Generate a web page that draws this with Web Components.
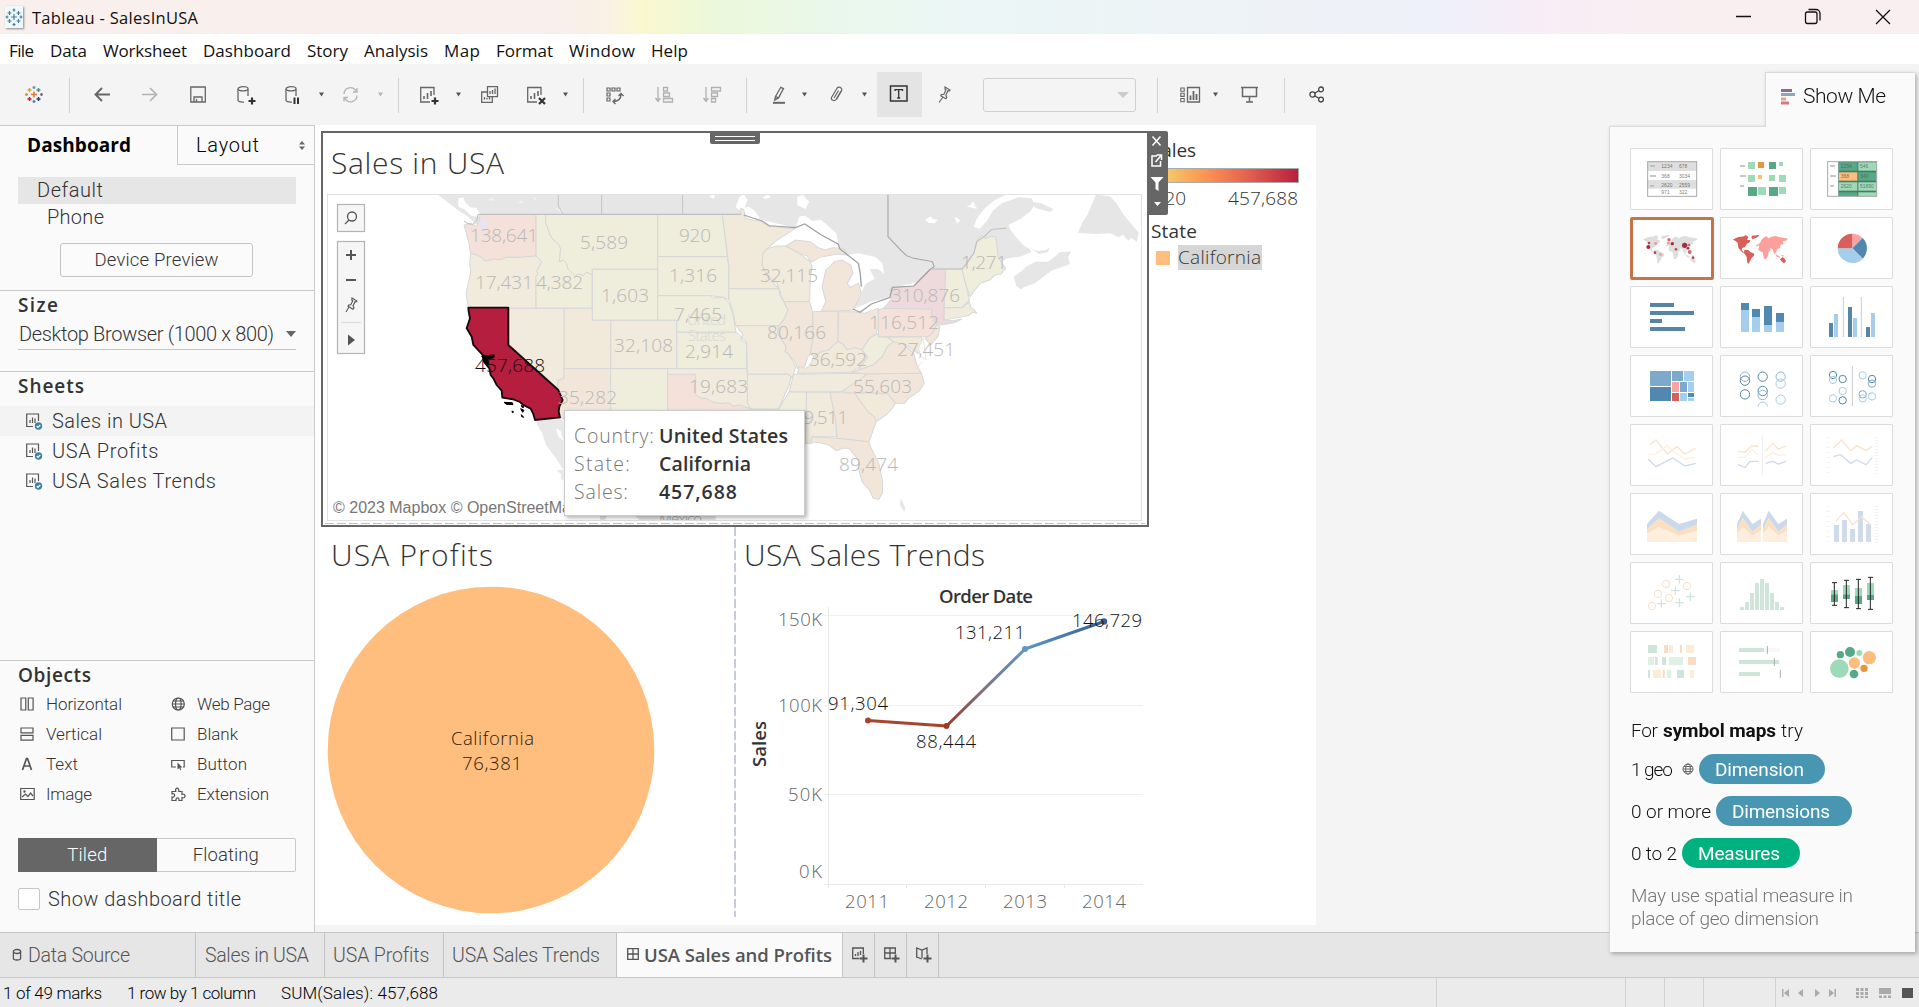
<!DOCTYPE html>
<html lang="en">
<head>
<meta charset="utf-8">
<title>Tableau - SalesInUSA</title>
<style>
html,body{margin:0;padding:0;width:1919px;height:1007px;overflow:hidden;background:#f4f4f4;color:#333;font-family:"Open Sans","Noto Sans",sans-serif}
</style>
</head>
<body>
<tableau-app></tableau-app>
<script>
const def=(name,html,init)=>customElements.define(name,class extends HTMLElement{
  connectedCallback(){
    if(this.shadowRoot)return;
    const r=this.attachShadow({mode:'open'});
    r.innerHTML=typeof html==='function'?html(this):html;
    if(init)init(this,r);
  }
});
const UI='Roboto,"Open Sans",sans-serif', TB='"Open Sans","Noto Sans",sans-serif';

/* Text run whose tracking is adjusted so that it spans exactly w pixels */
def('fit-text','<style>:host{display:block;white-space:nowrap;flex:none}span{display:inline-block}</style><span><slot></slot></span>',(h,r)=>{
  const w=+h.getAttribute('w'),s=r.querySelector('span'),n=h.textContent.length;
  h.style.width=w+'px';
  s.style.letterSpacing=((w-s.getBoundingClientRect().width)/(n-1))+'px';
});

/* ---------- toolbar icons ---------- */
const plus='<path d="M11.5 15h7M15 11.5v7" stroke="#333" stroke-width="2.2"/>';
const sheet='<path d="M14 9V1.5H.7V16H10" /><path d="M4 13v-3M7.500 13V7M11 10V5" stroke-width="1.6"/>';
const cyl='<ellipse cx="6" cy="2.8" rx="5" ry="2.1"/><path d="M1 3v11c0 1.500 2 2.300 6 2.100M11 3v7"/>';
const I={
 logo:'<g stroke-width="1.500"><path d="M9 5.500v6M6 8.500h6" stroke="#e8762c"/><path d="M4.500 2v4M2.500 4h4" stroke="#e0a040"/><path d="M13.500 2v4M11.500 4h4" stroke="#5b879b"/><path d="M4.500 11v4M2.500 13h4" stroke="#c72035"/><path d="M13.500 11v4M11.500 13h4" stroke="#1f447e"/><path d="M9 0v3M7.500 1.500h3" stroke="#7099a6"/><path d="M9 14v3M7.500 15.500h3" stroke="#59879b"/><path d="M1.500 7v3M0 8.500h3" stroke="#eb912c"/><path d="M16.500 7v3M15 8.500h3" stroke="#7b6f9b"/></g>',
 back:'<path d="M16 8.500H1.500M8 2L1.500 8.500 8 15" stroke-width="1.900"/>',
 fwd:'<path d="M0 8.500H14.500M8 2l6.500 6.500L8 15" stroke="#b4b4b4" stroke-width="1.700"/>',
 save:'<path d="M.8 1h14.500v15H.8z"/><path d="M4 16v-5h8v5M6.500 13v3" stroke-width="1.300"/>',
 dbp:cyl+plus, dbpause:cyl+'<path d="M9.500 11.500V18M13 11.500V18" stroke="#333" stroke-width="2"/>',
 refresh:'<g stroke="#b4b4b4"><path d="M2 8a6.500 6.500 0 0 1 11-4.500l1.500 2M15 9.500A6.500 6.500 0 0 1 4 14l-1.500-2"/><path d="M15 2v4h-4M2 15.500v-4h4"/></g>',
 nsheet:sheet+plus,
 dup:'<path d="M6.500.7h10v10h-10zM6.500 6H.7v10.300h10.600V11M9 8V5M11.500 8V4M14 8V2.500M3.500 13.500V11M6 13.500V12M8.500 13.500v-3"/>',
 csheet:sheet+'<path d="M12 12l6 6M18 12l-6 6" stroke="#333" stroke-width="2.200"/>',
 swap:'<g stroke-width="1.200"><path d="M1 2h3v3H1zM6 2h3v3H6zM11 2h3v3h-3zM1 7h3v3H1zM1 12h3v3H1z"/></g><path d="M7 15.500c5 0 8-2.500 8-7.500M12.500 10l2.500-2.500L17.500 10M9.500 13L7 15.500 9.500 18" stroke-width="1.400"/>',
 asc:'<g stroke="#b0b0b0"><path d="M3 1v14M.500 12L3 15.300 5.500 12M8.500 1.500h4v3.500h-4zM8.500 7h6v3.500h-6zM8.500 12.500h9V16h-9z"/></g>',
 desc:'<g stroke="#b0b0b0"><path d="M3 1v14M.500 12L3 15.300 5.500 12M8.500 1.500h9V5h-9zM8.500 7h6v3.500h-6zM8.500 12.500h4V16h-4z"/></g>',
 mark:'<path d="M1 16.800h12" stroke-width="2"/><path d="M3.500 10.500L8.800 1.300l2.700 1.300-5 9.300-3.800 2zM3.500 10.500l3 1.400"/>',
 clip:'<path d="M12 5L7 13.500c-1.500 2.300-5.500.5-4.500-2L7.500 3C9-.500 14 1.500 12.500 5l-5 8.500M9.500 4.500L5 12" stroke-width="1.200"/>',
 tbox:'<path d="M1.500 1H18v15H1.500z" stroke="#333" stroke-width="1.500"/><path d="M6 6V4.700h7.500V6M9.700 5v8M8.200 13h3" stroke="#333" stroke-width="1.300"/>',
 pin:'<path d="M7 1l5 3-1 1-1-.3-2.200 4.500 1 2.300-1 1.300-5-3 .6-1.200 2.500-.3L8 3.800l-1-.6zM5 11l-4 5.500" stroke-width="1.200"/>',
 cards:'<path d="M7.500 1.500h12V16h-12z"/><path d="M.8 2h3.400v3.200H.8zM.8 7.200h3.400v3.200H.8zM.8 12.500h3.400v3.200H.8z" stroke-width="1.100"/><path d="M10.500 14V9.500M13.500 14V5M16.500 14V8" stroke-width="1.800"/>',
 pres:'<path d="M0 1.500h17M1.500 2v8.500h14V2M8.500 10.500v5M5 16h7" stroke-width="1.500"/>',
 share:'<g stroke="#444"><circle cx="3.500" cy="8.500" r="2.600"/><circle cx="12" cy="3.400" r="2.400"/><circle cx="12" cy="13.600" r="2.400"/><path d="M5.700 7.200l4-2.500M5.700 9.800l4 2.500"/></g>',
 caret:'<path d="M0 6.500h5l-2.500 4z" fill="#555" stroke="none"/>',
 gcaret:'<path d="M0 6.500h5l-2.500 4z" fill="#b4b4b4" stroke="none"/>'
};
def('tool-icon',h=>`<style>:host{display:block;flex:none}svg{display:block;overflow:visible}</style><svg width="20" height="18" fill="none" stroke="#666" stroke-width="1.300">${I[h.getAttribute('name')]}</svg>`);

def('tool-bar',()=>{
  const items=[['logo',25,18],['|',69,1],['back',94,16],['fwd',142,16],['save',190,16],['dbp',237,18],['dbpause',285,16],['caret',319,5],['refresh',342,18],['gcaret',378,5],['|',398,1],['nsheet',420,19],['caret',456,5],['dup',481,18],['csheet',527,19],['caret',563,5],['|',583,1],['swap',606,18],['asc',655,18],['desc',703,18],['|',746,1],['mark',772,14],['caret',802,5],['clip',829,14],['caret',862,5],['T',877,45],['pin',938,14],['B',983,153],['|',1157,1],['cards',1180,20],['caret',1213,5],['pres',1241,17],['|',1284,1],['share',1309,16]];
  let p=0,o='';
  for(const[n,x,w]of items){const s=`margin-left:${x-p}px;width:${w}px`;p=x+w;
    o+=n=='|'?`<i style="${s}"></i>`:n=='T'?`<b style="${s}"><tool-icon name="tbox"></tool-icon></b>`:n=='B'?`<u style="${s}"></u>`:`<tool-icon name="${n}" style="${s}"></tool-icon>`}
  return `<style>:host{display:flex;align-items:center;height:61px;background:#f4f4f4;box-sizing:border-box}
  i{height:35px;background:#d2d2d2;flex:none;margin-top:2px}b{height:45px;background:#e4e4e4;display:flex;align-items:center;padding:0 0 2px 12px;box-sizing:border-box;flex:none}
  u{height:34px;border:1.500px solid #d0d0d0;border-radius:3px;box-sizing:border-box;flex:none;display:flex;align-items:center;justify-content:flex-end;padding-right:6px}
  u:after{content:"";border:6px solid transparent;border-top:6px solid #ccc;border-bottom:0}</style>${o}`});

def('title-bar',`<style>:host{display:flex;align-items:center;height:34px;font:16.500px "Open Sans",sans-serif;color:#111;background:linear-gradient(90deg,#f9f0ed 0,#f9efec 560px,#f9f2e4 610px,#f9f8cf 642px,#edf8da 710px,#eaf8ea 820px,#ebf6f6 960px,#eff1f7 1380px,#eef0fb 1440px,#f9edf6 1550px,#f9eff0 1700px)}
.l{width:18px;height:22px;margin-left:5px;background:#eff8fa;box-shadow:1px 1px 2px #888}.t{margin-left:9px}svg{display:block}.w{margin-left:auto;margin-right:28px}</style>
<div class="l"><svg width="18" height="22" stroke="#477f9b" stroke-width="1.200"><path d="M9 8v6M6 11h6M4.500 5v4M2.500 7h4M13.500 5v4M11.500 7h4M4.500 13v4M2.500 15h4M13.500 13v4M11.500 15h4M9 2.500v3M7.500 4h3M9 17v3M7.500 18.500h3M2 9.500v3M.500 11h3M16 9.500v3M14.500 11h3"/></svg></div>
<div class="t"><fit-text w="166">Tableau - SalesInUSA</fit-text></div>
<svg class="w" width="156" height="20" fill="none" stroke="#111" stroke-width="1.300"><path d="M1 9.500h15M141 3l14 14M155 3l-14 14"/><rect x="70.500" y="5" width="11.500" height="11.500" rx="2"/><path d="M73.500 2.500h7.500a4 4 0 0 1 4 4v7"/></svg>`);

def('menu-bar',()=>{let p=0,o='';
 for(const[t,x,w]of[['File',9,25],['Data',50,37],['Worksheet',103,84],['Dashboard',203,88],['Story',307,41],['Analysis',364,64],['Map',444,36],['Format',496,57],['Window',569,66],['Help',651,37]]){o+=`<fit-text w="${w}" style="margin-left:${x-p}px">${t}</fit-text>`;p=x+w}
 return `<style>:host{display:flex;align-items:center;height:30px;box-sizing:border-box;padding-top:2px;background:#fff;font:17px "Open Sans",sans-serif;color:#111}</style>${o}`});

/* ---------- left pane ---------- */
const oi={
 h:'<path d="M1 1h4.800v12H1zM8.300 1h4.800v12H8.300z"/>',v:'<path d="M1 1h12v4.800H1zM1 8.300h12v4.800H1z"/>',
 t:'<path d="M2.500 13L6.500 1.500h1L11.500 13M4 9h6" stroke-width="1.700"/>',
 i:'<path d="M.7 1.500h13.500v11H.7z"/><path d="M2 10l3.500-3L8 9.500 10.500 6l2.500 3"/><circle cx="4.500" cy="4.500" r=".6"/>',
 w:'<circle cx="7.300" cy="7" r="6"/><ellipse cx="7.300" cy="7" rx="2.800" ry="6"/><path d="M1.300 7h12M2 4h10.600M2 10h10.600"/>',
 b:'<path d="M.7 1h12.500v12H.7z"/>',n:'<path d="M5 10H.7V3.500h12.500V10H12"/><path d="M6.500 5.500v7l1.800-1.500 1 2.200 1-.4-1-2.200h2.200z" fill="#555" stroke="none"/>',
 e:'<path d="M1 13.500V10c3.500.7 3.500-4 0-3.200V4.500h3.800C3.500 0 8.700 0 7.800 4.500H11v3c4-1.500 4 4.500 0 3v3H8c.5-3.500-3.500-3.500-3 0z"/>'};
def('object-item',h=>`<style>:host{display:flex;align-items:center;height:30px;font:300 17px ${UI}}svg{width:16px;height:14px;flex:none;overflow:visible}fit-text{margin-left:10px}</style><svg fill="none" stroke="#555" stroke-width="1.200">${oi[h.getAttribute('i')]}</svg><fit-text w="${h.getAttribute('w')}">${h.textContent}</fit-text>`);
def('sheet-item',h=>`<style>:host{display:flex;align-items:center;height:30px;padding-left:26px;font:300 20px ${UI};color:#333}:host([on]){background:#f3f3f3}svg{flex:none;margin-right:9px}</style>
<svg width="17" height="17" fill="none" stroke="#555" stroke-width="1.200"><path d="M7 13.500H.7V1h11.800v7M4 10V7M6.500 10V4.500M9 10V5.500"/><circle cx="12.500" cy="13" r="3.700" fill="#3d84a0" stroke="none"/><path d="M10.700 13l1.300 1.300 2.300-2.500" stroke="#fff"/></svg><fit-text w="${h.getAttribute('w')}">${h.textContent}</fit-text>`);
def('side-pane',`<style>:host{display:flex;flex-direction:column;width:315px;height:807px;box-sizing:border-box;border-right:1px solid #c9c9c9;border-top:1px solid #c9c9c9;background:#fafafa;font:300 20px ${UI};color:#333}
.tabs{display:flex;height:39px}.tabs .a{width:177px;box-sizing:border-box;padding-left:27px;font:700 19px/38px ${TB};color:#000}.tabs .b{flex:1;border-left:1px solid #c9c9c9;border-bottom:1px solid #c9c9c9;box-sizing:border-box;padding:0 9px 0 18px;display:flex;align-items:center;justify-content:space-between;color:#000}
.dev{margin:12px 18px 0;height:27px;line-height:27px;background:#e6e6e6;padding-left:19px}.ph{padding-left:47px;height:27px;line-height:27px}
.btn{margin:12px 0 0 60px;width:191px;height:32px;border:1px solid #c4c4c4;border-radius:3px;background:#fbfbfb;display:flex;align-items:center;justify-content:center;font-size:18.500px}
h3{margin:0;padding:0 18px;font:600 19px/29px ${TB};height:30px}hr{border:0;height:1px;background:#c9c9c9;margin:0;flex:none}
.sel{margin:0 18px;border-bottom:1px solid #c4c4c4;height:28px;line-height:26px;display:flex;justify-content:space-between;align-items:flex-start;padding-left:1px}
.sel i{border:5.500px solid transparent;border-top:6px solid #666;border-bottom:0;margin-top:10px}.g{display:grid;grid-template-columns:151px 120px;padding:0 20px}
.seg{display:flex;margin:29px 18px 0;height:34px}.seg div{flex:1;display:flex;align-items:center;justify-content:center;box-sizing:border-box;font-size:18.500px}.seg .x{background:#666;color:#fff}.seg .y{border:1px solid #c9c9c9;border-left:0;border-radius:0 2px 2px 0}
.chk{display:flex;align-items:center;margin:16px 18px 0;height:22px;font-size:20px}.chk i{width:20px;height:20px;background:#fff;border:1px solid #c6c6c6;border-radius:2px;margin-right:8px}</style>
<div class="tabs"><div class="a"><fit-text w="104">Dashboard</fit-text></div><div class="b"><fit-text w="63">Layout</fit-text><svg width="6" height="9"><path d="M0 3.500h6L3 0zM0 5.500h6L3 9z" fill="#666"/></svg></div></div>
<div class="dev"><fit-text w="66">Default</fit-text></div><div class="ph"><fit-text w="57">Phone</fit-text></div>
<div class="btn"><fit-text w="124">Device Preview</fit-text></div>
<hr style="margin-top:13px"><h3><fit-text w="40">Size</fit-text></h3>
<div class="sel"><fit-text w="255">Desktop Browser (1000 x 800)</fit-text><i></i></div>
<hr style="margin-top:21px"><h3 style="height:34px"><fit-text w="66">Sheets</fit-text></h3>
<sheet-item on w="115">Sales in USA</sheet-item><sheet-item w="106">USA Profits</sheet-item><sheet-item w="164">USA Sales Trends</sheet-item>
<hr style="margin-top:164px"><h3 style="height:28px"><fit-text w="73">Objects</fit-text></h3>
<div class="g"><object-item i="h" w="76">Horizontal</object-item><object-item i="w" w="73">Web Page</object-item><object-item i="v" w="56">Vertical</object-item><object-item i="b" w="41">Blank</object-item><object-item i="t" w="32">Text</object-item><object-item i="n" w="50">Button</object-item><object-item i="i" w="46">Image</object-item><object-item i="e" w="72">Extension</object-item></div>
<div class="seg"><div class="x"><fit-text w="40">Tiled</fit-text></div><div class="y"><fit-text w="66">Floating</fit-text></div></div>
<div class="chk"><i></i><fit-text w="193">Show dashboard title</fit-text></div>`);

/* ---------- map ---------- */
const Y='#efeddc',Y2='#f0ebdc',O='#f1e9da',O2='#f2e6da',P='#f4e1da';
const W=[
 ['432,315 450,310 470,318 478,300 480,283 648,283 648,408 600,412 560,412 540,419 520,418 495,424 484,412 470,405 452,400 447,370 440,345',P],
 ['452,400 470,405 484,412 495,424 520,418 540,419 560,412 600,412 648,408 665,425 650,455 655,462 648,470 648,565 445,565 438,520 446,485 452,455 449,430',Y2],
 ['648,283 677,283 677,310 685,328 690,345 700,360 712,368 722,385 718,425 730,420 740,430 743,445 752,455 765,468 775,462 790,466 800,456 817,465 817,565 648,565 648,470 655,462 650,455 665,425 648,408',Y],
 ['677,283 1013,283 1013,448 817,448 817,465 800,456 790,466 775,462 765,468 752,455 743,445 740,430 730,420 718,425 722,385 712,368 700,360 690,345 685,328 677,310',Y],
 ['1013,283 1207,283 1215,350 1222,410 1013,410',Y],['1013,410 1222,410 1226,440 1226,540 1210,532 1170,527 1013,527',Y],
 ['817,448 1013,448 1013,601 817,601',Y],['1013,527 1170,527 1180,534 1210,532 1228,550 1240,590 1248,637 1070,637 1070,601 1013,601',Y],
 ['1070,637 1248,637 1265,650 1262,660 1280,670 1280,746 1070,746',Y],['872,601 1070,601 1070,746 872,746',Y2],
 ['732,565 817,565 817,601 872,601 872,746 732,746',O],['565,565 732,565 732,775 715,780 712,810 565,675',Y2],
 ['732,746 872,746 872,930 820,930 720,892 716,875 728,840 712,810 715,780 732,775',O2],['872,746 1043,746 1043,900 872,900',Y],
 ['1043,763 1127,763 1127,825 1145,835 1160,835 1175,845 1200,850 1225,848 1240,858 1260,855 1280,862 1295,865 1310,930 1043,930',P],
 ['1043,746 1280,746 1282,763 1290,800 1290,865 1280,862 1260,855 1240,858 1225,848 1200,850 1175,845 1160,835 1145,835 1127,825 1127,763 1043,763',Y2]];
const E=[
 ['-48,283 2,283 2,265 10,268 15,295 35,300 60,305 75,318 90,318 110,322 130,325 150,325 100,360 75,385 62,400 60,435 75,470 105,506 -30,506 -30,440 -40,350',O],
 ['75,385 100,378 125,378 160,400 190,425 195,440 190,480 188,545 118,545 105,506 100,490 75,470 60,435 62,400',Y2],
 ['-30,506 105,506 108,525 118,545 130,570 118,600 105,617 -12,617 -20,570 -30,540',Y],
 ['-10,617 105,617 102,640 125,680 122,695 130,700 150,740 145,763 138,775 128,775 130,763 20,763 18,665 4,655 8,645',Y2],
 ['20,763 130,763 138,770 132,800 125,815 115,840 104,868 30,868 20,850',Y2],['30,868 104,868 104,900 30,900',Y],
 ['118,545 188,545 196,575 197,660 190,700 182,715 175,740 155,745 150,728 130,700 122,695 125,680 102,640 105,617 118,600 130,570',O2],
 ['197,575 265,573 265,665 250,678 240,690 220,695 200,710 190,700 197,660',O2],
 ['267,575 305,575 335,580 374,565 374,620 368,640 350,655 330,690 310,683 290,690 278,672 265,665',O2],
 ['220,573 232,545 222,500 228,470 232,450 245,438 255,425 275,420 300,435 305,460 290,490 297,502 320,490 328,520 318,545 305,570 265,573',O2],
 ['125,378 150,360 190,365 210,382 230,390 250,383 280,385 290,405 260,402 235,408 215,412 195,425 190,425 182,408 160,400',O2],
 ['155,760 160,740 178,745 190,735 200,710 220,695 240,690 250,678 265,665 278,672 290,690 310,683 330,690 345,712 325,740 300,757',O],
 ['145,763 345,760 320,785 275,815 133,815',Y2],['330,690 350,655 374,640 374,650 400,652 415,665 398,680 385,710 360,735 320,750 345,712',Y],
 ['300,757 320,750 360,735 385,710 398,680 415,665 440,670 470,700 475,725 480,740 490,760 345,762',O2],
 ['374,570 388,565 518,567 518,590 535,610 520,640 512,650 374,650',P],
 ['400,652 490,650 500,690 480,700 450,675 415,665',O],['520,600 540,620 535,650 515,675 500,655 520,640 532,612',O2],
 ['388,565 400,550 410,535 405,505 440,500 470,500 485,480 515,447 556,447 556,500 552,560 550,600 575,602 600,597 580,608 560,612 540,615 518,590 518,567','#eed9dc'],
 ['556,447 600,447 612,500 620,540 600,563 552,563',Y],['552,563 600,563 620,545 625,565 632,568 640,580 628,577 620,585 605,590 552,600',Y2],
 ['600,447 612,432 620,415 632,400 640,365 648,352 655,347 665,355 680,348 692,352 698,410 708,430 718,445 705,462 690,465 675,480 650,490 635,510 622,530 612,500',Y],
 ['345,762 490,760 498,790 485,812 470,825 455,835 445,850 420,850 400,822 345,818 310,820 275,815',O2],
 ['310,820 345,818 400,822 420,850 410,868 395,885 368,905 362,890 345,875 328,848',O],
 ['243,817 310,820 328,848 345,875 362,890 368,905 352,955 348,965 262,955 258,900',O2],
 ['180,817 243,817 258,900 262,950 195,950 195,970 176,970',Y2],['133,815 180,817 176,970 104,868',Y],
 ['195,950 262,955 348,965 355,985 365,1008 375,1030 380,1055 385,1080 385,1120 375,1138 360,1135 350,1110 330,1085 320,1045 320,1020 295,985 278,985 260,992 240,975 215,968 190,965',O2]];
const poly=a=>a.map(([p,f])=>`<polygon points="${p}" fill="${f}"/>`).join('');
/* label: text, left x, centre y, width */
const ML=[['138,641',470,235,68],['5,589',580,242,48],['920',679,235,32],['17,431',475,282,58],['4,382',536,282,47],['1,316',669,275,48],['1,603',601,295,48],['7,465',674,314,48],['32,108',614,345,59],['2,914',685,351,48],['19,683',689,386,59],['35,282',558,397,59],['32,115',760,275,58],['1,271',961,262,46],['310,876',891,295,69],['116,512',869,322,70],['80,166',767,332,59],['27,451',897,349,58],['36,592',809,359,58],['55,603',853,386,59],['19,511',793,417,55],['89,474',839,464,59]];
def('us-map',()=>`<style>:host{display:block;width:815px;height:327px;box-sizing:border-box;border:1px solid #e2e2e2}svg{display:block}text{font:300 19px ${TB}}</style>
<svg width="813" height="325" viewBox="328 195 813 325">
<g transform="translate(740 120) scale(.36996 .33333)" fill="#e6e6e6">
<path d="M-828 215l30 25 35 30 28 20 20 22 15 3 14-8 18-24H2L150 325l165 110 15 85-25 55 15 3 35-25 55-20-5-30 65-3 45-53 85 0 18 10 30-5 55-25 20-12 35-5 30-15-5-8-18-12-20-25-14-20-5-15 35-20 25-22 10-18-8-20-35-3-45 18-25 22-15 30-20 24-16-5 8-25 20-30 28-25 45-25 30-30 20-30H-828z"/>
<path d="M740 470l25-20 8-10 25-15 35 0 32-28 30-3-8 18 5 20-50 20-45 38-30 12-8 6-12-10zM965 215l5 10 30 4 18 22 20 35 40 52-5 28-15-12-8 8-15-18-12 8-22-12-40 2-48-4 15-35 12-20zM785 245l30 5 33 18-10 8-40-13zM785 385l18 8 25-3 8-8-3 14-25 6zM435 1135l12 30-3 10-12-20zM340 1155l14-8zM420 1090l12 2z"/>
<path fill="#fff" d="M75 385l30-35 45-25 10-35 15-3 20 15 25-2 40 40 10 48-40 5-15-15-25-10-40-5-15 12-35-5zM155 230l15-5 17 20-10 22-22-12zM500 300l8-5 6-6 8 8 12 3-8 10-16-2zM580 292l8 2 8 8-10 8zM612 258l10-2 8-12 6 14 6 8-14-2zM20 240l-10-18-12 10-10 30 20 15zM60 232l14-8 10 6-14 8zM235 408l55-3 30-5 45 10 20 20 5 32-16-14-24-2 14 30-25 15-10 25-10-20-40-60zM195 425l40-17 20 17-23 25-10 50 10 45-20 33-20-18-2-80zM300 570l60-28 50-7-10 12-75 33zM405 505l50-12 30-8-15 15-60 12z"/>
</g>
<g transform="translate(320 120) scale(.33333)"><path fill="#fff" d="M415 235l15-3 5 14 15 16 20 2 10 18-5 8-20-2-22-20-18-8zM1262 283l5-18 20-5 15 10 18 25-40 2zM1165 228l20-4-4 12z"/><path fill="#efefef" d="M500 240l20-8 6 12zM590 250l14-10 8 10zM700 262l30 8-6 8zM640 232l12 4-8 8z"/><path fill="#e8e8e8" d="M648 901l72-8 10 10v180l-8-8 2-12-14-12 20-2-22-34-30-40-12-38-14-22zM712 920l12 20-4 28-10-18z"/><path fill="#fff" d="M708 925l14 8 8 30-16-16z"/><path fill="#e3e3e3" d="M840 1188h20l-5 12h-15zM945 1186h242v16H960z"/>
<path d="M715 223v35l15 25M845 223v60M1088 223v60" fill="none" stroke="#c4c4c4" stroke-width="3"/>
<g stroke="#d6d8d8" stroke-width="3">${poly(W)}</g></g>
<g transform="translate(740 120) scale(.36996 .33333)"><g stroke="#d6d8d8" stroke-width="2.800">${poly(E)}</g>
<g fill="none" stroke="#a2a2a4" stroke-width="2.800"><path d="M10 285l50 18 20 15 10 0 60 5 25-11 45 33 45 27 5 15 50 43 5 30 3 40M305 567l20 10 30-25 50-19 7-31 58-4 45-51" stroke-width="3.600"/><path d="M515 447l10-7-5-15-50-10-20-8-20-22-30-35V223" /><path d="M515 447h85l12-15 20-32 8-35 20-15 20-22 40-3" stroke="#bdbdbd"/></g>
<path d="M495 655l-12 30 5 25 15 10-3-30zM478 745l15-20" fill="#fff" stroke="#ddd" stroke-width="2"/></g>
<g transform="translate(320 120) scale(.33333)"><path d="M475 320l10-30 12 0 3 15 8 10-10 10-3 18 8 12-15-6 4-20-8-8z" fill="#e8e6ec"/><path d="M432 303l12 8 14 2 12-10 4-20h790" fill="none" stroke="#bbb" stroke-width="3"/>
<path d="M445 563H565V675L715 810 728 840 718 860 716 875 720 892 645 900 640 882 632 866 610 855 600 846 580 838 547 833 545 812 530 795 520 775 512 765 508 745 492 725 488 705 460 675 455 650 440 625 450 595 446 575z" fill="#b61e3f" stroke="#16090c" stroke-width="5.500" stroke-linejoin="round"/>
<path d="M485 708l38-3-2 8-18 4 4 18-10-5z M552 847l25 1 2 6-20-1zM576 873l5 3-4 2zM602 866l10 5-4 6zM604 884l7 8-6-2zM604 856l8 5-5 2z" stroke="#000" stroke-width="3"/></g>
<g fill="#d6d8d2"><text x="687" y="325" textLength="39" style="font-size:15px">United</text><text x="688" y="341" textLength="38" style="font-size:15px">States</text><text x="659" y="524" textLength="43" style="font-size:15px;fill:#999">Mexico</text></g>
<g fill="#b9b8b6">${ML.map(([t,x,y,w])=>`<text x="${x}" y="${y+7}" textLength="${w}">${t}</text>`).join('')}</g>
<text x="475" y="372" textLength="70" fill="#1c0b10">457,688</text>
<text x="333" y="513" style="font:16px 'Liberation Sans',sans-serif" fill="#777">© 2023 Mapbox © OpenStreetMap</text>
<g fill="#f6f6f6" stroke="#b4b4b4" stroke-width="1.200"><rect x="337.500" y="204.500" width="27" height="27"/><rect x="337.500" y="241.500" width="27" height="112"/><path d="M341 322.500h20" stroke="#ddd"/></g>
<g fill="none" stroke="#555" stroke-width="1.300"><circle cx="352" cy="216.500" r="4.500"/><path d="M349 220l-4 4"/><path d="M351 250v10M346 255h10M346 280h10" stroke-width="2"/><path d="M352 298l5 3-1 1-1-.3-2 4 1 2.300-1 1.300-5-3 .6-1.200 2.200-.3 2-4-1-.6zM349 307l-3 5" stroke-width="1.100"/></g><path d="M348 334.500v11l7-5.500z" fill="#555"/>
</svg>`);

def('map-tooltip',`<style>:host{display:grid;grid-template-columns:85px auto;align-content:start;row-gap:0;width:241px;height:106px;box-sizing:border-box;background:#fff;border:1px solid #ccc;box-shadow:2px 2px 4px rgba(0,0,0,.3);padding:11px 0 0 9px;font:300 19.500px/28px ${TB};color:#777}b{font-weight:600;color:#333}</style>
<fit-text w="80">Country:</fit-text><b><fit-text w="129">United States</fit-text></b><fit-text w="56">State:</fit-text><b><fit-text w="92">California</fit-text></b><fit-text w="54">Sales:</fit-text><b><fit-text w="78">457,688</fit-text></b>`);

/* ---------- dashboard ---------- */
def('zone-title',h=>`<style>:host{display:block;font:300 30px/40px ${TB};color:#333;height:40px}</style><fit-text w="${h.getAttribute('w')}">${h.textContent}</fit-text>`);
def('map-zone',`<style>:host{display:block;position:relative;width:828px;height:396px;box-sizing:border-box;border:2px solid #666;background:#fff}
zone-title{margin:10px 0 0 8px}us-map{margin:11px 0 0 4px}.grip,.bar,map-tooltip{position:absolute}.grip{left:387px;top:-2px;width:50px;height:13px;background:#666;border-radius:0 0 2px 2px}.grip:before{content:"";display:block;margin:5px 5px 0;height:3px;border:solid #fff;border-width:1px 0}.bar{left:824px;top:-2px;width:21px;height:84px;background:#666;border-radius:0 2px 2px 0}.dash{margin:2px 2px 0;height:1px;background:repeating-linear-gradient(90deg,#b9c0cc 0 9px,transparent 9px 12px)}
map-tooltip{left:241px;top:277px}</style>
<zone-title w="173">Sales in USA</zone-title><us-map></us-map><div class="dash"></div><div class="grip"></div>
<div class="bar"><svg width="21" height="84" fill="none" stroke="#fff" stroke-width="1.500"><path d="M5.500 5.500l8 9M13.500 5.500l-8 9M10 25H5v10h8.500v-5M8.500 31l6-7M9.500 24H14.500v5"/><path d="M3.500 46h13l-5 5.500V60l-3-2v-6.500zM7 71h7l-3.500 4z" fill="#fff" stroke="none"/></svg></div><map-tooltip></map-tooltip>`);
def('dash-legend',`<style>:host{display:block;width:148px;font:300 19px/24px ${TB};color:#333;padding-top:7px}.h{font-weight:400}.g{height:13px;margin:6px 0 2px;border:1px solid #aaa;background:linear-gradient(90deg,#f3e080,#f4c264 14%,#fd9552 36%,#e3604f 66%,#b81f40)}.r{display:flex;justify-content:space-between;line-height:26px;height:27px;padding:0 1px 0 3px}.c{display:flex;align-items:center;padding-left:5px}.c i{width:14px;height:14px;background:#ffbe7d;margin-right:8px}.c div{background:#d6d6d6;height:25px;padding-right:1px}</style>
<div class="h"><fit-text w="45">Sales</fit-text></div><div class="g"></div><div class="r"><fit-text w="32">920</fit-text><fit-text w="70">457,688</fit-text></div><div class="h" style="margin:7px 0 2px"><fit-text w="46">State</fit-text></div><div class="c"><i></i><div><fit-text w="83">California</fit-text></div></div>`);
def('profit-pie',`<style>:host{display:block}svg{display:block}text{font:300 18.500px ${TB};fill:#2b1a0c}</style><svg width="410" height="336" viewBox="325 583 410 336"><circle cx="491" cy="750" r="163.300" fill="#ffbe7d"/><text x="451" y="745" textLength="83">California</text><text x="462" y="770" textLength="60">76,381</text></svg>`);
def('trend-chart',()=>`<style>:host{display:block}svg{display:block}text{font:300 18.500px ${TB};fill:#666}.k{fill:#111}.b{font-weight:600;fill:#333}</style><svg width="410" height="336" viewBox="736 583 410 336">
<defs><linearGradient id="g" x1="946" y1="726" x2="1025" y2="649" gradientUnits="userSpaceOnUse"><stop stop-color="#9c3a26"/><stop offset=".5" stop-color="#7b7484"/><stop offset="1" stop-color="#5f97c2"/></linearGradient><linearGradient id="f" x1="1025" y1="0" x2="1104" y2="0" gradientUnits="userSpaceOnUse"><stop stop-color="#5f97c2"/><stop offset="1" stop-color="#345f8f"/></linearGradient></defs>
<path d="M824 615.500h319M824 705.500h319M824 794.500h319" stroke="#efefef"/><path d="M824 884.500h319M828.500 607v281M906.500 884v4M985.500 884v4M1064.500 884v4" stroke="#e8e8e8" fill="none"/>
<g stroke-width="3" fill="none" stroke-linecap="round"><path d="M868 720.500L946.500 726" stroke="#a6452f"/><path d="M946.500 726L1025 649" stroke="url(#g)"/><path d="M1025 649l79-27.500" stroke="url(#f)"/></g>
<circle cx="868" cy="720.500" r="3" fill="#a9432c"/><circle cx="946.500" cy="726" r="3" fill="#9c3a26"/><circle cx="1025" cy="649" r="3" fill="#5f97c2"/><circle cx="1104" cy="621.500" r="3.200" fill="#345f8f"/>
<text class="b" x="939" y="603" textLength="94">Order Date</text><text class="b" transform="translate(766 767) rotate(-90)" textLength="46">Sales</text>
${[['150K',778,626,44],['100K',778,712,44],['50K',788,801,34],['0K',799,878,23],['2011',845,908,44],['2012',924,908,44],['2013',1003,908,44],['2014',1082,908,44]].map(a=>`<text x="${a[1]}" y="${a[2]}" textLength="${a[3]}">${a[0]}</text>`).join('')}
${[['91,304',828,710,60],['88,444',916,748,60],['131,211',955,639,70],['146,729',1072,627,70]].map(a=>`<text class="k" x="${a[1]}" y="${a[2]}" textLength="${a[3]}">${a[0]}</text>`).join('')}</svg>`);
def('dash-board',`<style>:host{display:block;width:1001px;height:800px;background:#fff;box-sizing:border-box;padding:6px 0 0 6px}.a,.b{display:flex}dash-legend{margin-left:2px}.l{width:413px}.l zone-title{margin-left:10px}.r zone-title{margin-left:8px}.z{padding-top:8px}profit-pie{margin:8px 0 0 4px}trend-chart{margin-top:8px}.d{width:2px;height:390px;background:repeating-linear-gradient(#c5cbdc 0 9px,transparent 9px 12px)}</style>
<div class="a"><map-zone></map-zone><dash-legend></dash-legend></div><div class="b"><div class="l z"><zone-title w="162">USA Profits</zone-title><profit-pie></profit-pie></div><div class="d"></div><div class="r z"><zone-title w="241">USA Sales Trends</zone-title><trend-chart></trend-chart></div></div>`);

/* ---------- Show Me ---------- */
const R=(x,y,w,h,f)=>`<rect x="${x}" y="${y}" width="${w}" height="${h}" fill="${f}"/>`;
const C=(x,y,r,f)=>`<circle cx="${x}" cy="${y}" r="${r}" fill="${f}"/>`;
const Cs=(x,y,r,f)=>`<circle cx="${x}" cy="${y}" r="${r}" fill="none" stroke="${f}" stroke-width="3"/>`;
const L=(p,c,w=4)=>`<polyline points="${p}" fill="none" stroke="${c}" stroke-width="${w}"/>`;
const T=(x,y,t)=>`<text x="${x}" y="${y}" font-size="15" fill="#555" fill-opacity=".8">${t}</text>`;
const d='#5686a4',l='#a5cdec',g='#9fdab8',G='#55a987',o='#e8953b',q='#fdbd7d';
const world=(a,b,c,e)=>`<path fill="${a}" d="M48 63l8-3 17-2 4-4 8 6-4 8 10 2-2 6-8 4-6 10-8 3-2 6 8 8-4 1-8-8-6-8-2-14-6-6-9-4zM96 56l22-2-4 6-8 3-8 4-4-5z"/><path fill="${b}" d="M73 98l12 1 6 6 12 5-2 8-6 4-6 12-4 6-3-2-2-18-8-12z"/><path fill="${c}" d="M120 78l4-8 6-8 10-4 6 6 8-5 12-2 14 4 24 4-6 6-10 2 2 8-8 2-2 10-8 2-4 12-6 4-4-14-8-3-5 12-6-10-8-4-4-3-8 2-2-6-6 4-4-4-2 3zM118 86l10-4 8 4 10 0 6 14-6 4-2 12-6 10-6 0-4-20-10-4-3-6zM164 108l10 8 8 4-2 2-10-3zM182 112l10 4-4 3z"/><path fill="${e}" d="M180 127l8-7 5 4 5 9-6 6-8-6z"/>`;
const ticks='<path d="M55 40v110" stroke="#eee" stroke-width="9" stroke-dasharray="2 13"/><path d="M200 40v110" stroke="#eee" stroke-width="9" stroke-dasharray="2 7"/>';
const bl='#cfdaea',or='#fae3cc',lo='#fdf0e0',gg='#cfe5da',lg='#dff1e5';
const area=(x,s)=>{const p=a=>a.map(([u,v])=>`${x+u*s},${v}`).join(' ');const A=[[0,93],[36,53],[96,93],[150,77]],B=[[0,110],[36,76],[96,117],[150,95]],D=[[0,122],[36,103],[96,128],[150,113]];const rv=z=>[...z].reverse();return `<polygon fill="#ccd9ea" points="${p([...A,...rv(B)])}"/><polygon fill="#fbdfc0" points="${p([...B,...rv(D)])}"/><polygon fill="#fdeedd" points="${p([...D,[150,147],[0,147]])}"/>`};
const box=(x,a,m,b,t,u)=>R(x-10,a,21,m-a,g)+R(x-10,m,21,b-m,G)+`<path d="M${x} ${t}V${u}M${x-7} ${t}h15M${x-7} ${u}h15" stroke="#222" stroke-width="3"/>`;
const pl=(x,y)=>`<path d="M${x-13} ${y}h26M${x} ${y-13}v26" stroke="#c5e0da" stroke-width="3"/>`;
const dash=`<path d="M60 54h15M60 84h18M60 114h12" stroke="#b5b5b5" stroke-width="5"/>`;
const K=[
 R(52,40,149,105,'#fff')+R(52,40,149,29,'#dedede')+R(52,96,149,26,'#dedede')+'<rect x="53" y="41" width="147" height="104" fill="none" stroke="#aaa" stroke-width="3"/>'+dash+T(94,61,'1234')+T(147,61,'678')+T(94,89,'368')+T(147,89,'3034')+T(94,116,'2620')+T(147,116,'2559')+T(94,139,'971')+T(147,139,'322'),
 dash+R(84,42,21,21,g)+R(114,42,18,18,o)+R(147,42,21,21,G)+R(177,42,12,12,g)+R(84,81,21,21,g)+R(114,81,12,12,q)+R(147,81,18,18,g)+R(177,81,21,21,g)+R(84,117,27,27,G)+R(114,117,24,24,g)+R(147,117,27,27,G)+R(177,117,21,21,g),
 R(52,40,149,105,'#fff')+R(85,40,115,105,'#4a7a64')+R(87,43,55,25,G)+R(145,43,55,25,g)+R(87,73,55,25,q)+R(145,73,55,25,G)+R(87,103,55,25,g)+R(145,103,55,25,g)+R(87,133,55,11,G)+R(145,133,55,11,g)+'<rect x="53" y="41" width="147" height="104" fill="none" stroke="#aaa" stroke-width="3"/>'+dash+T(92,60,'1234')+T(150,60,'546')+T(92,91,'368')+T(150,91,'340')+T(92,121,'2620')+T(150,121,'51890'),
 world('#dedede','#dedede','#dedede','#dedede')+C(55,90,6,'#a52a44')+C(57,78,4,'#b9414f')+C(77,79,5,'#f29c9c')+C(117,68,5,'#d46a6a')+C(127,80,5,'#a52a44')+C(115,78,5,'#f29c9c')+C(164,85,8,'#a52a44')+C(177,84,4,'#d46a6a')+C(138,97,4,'#c24a55')+C(174,94,4,'#a52a44')+C(179,105,6,'#d46a6a')+C(75,107,4,'#b9414f')+C(92,112,5,'#f0a5a5')+C(189,122,4,'#b9414f'),
 world('#d9605a','#d9605a','#ff9f9b','#d9605a'),
 '<path d="M127 94V50a44 44 0 0 1 31 13z" fill="#f9a3a3"/><path d="M127 94l31-31a44 44 0 0 1 0 62z" fill="#5088af"/><path d="M127 94l31 31a44 44 0 0 1-75-31z" fill="#a5cdec"/><path d="M127 94H83a44 44 0 0 1 44-44z" fill="#d9605a"/>',
 R(60,51,72,12,d)+R(60,75,132,12,d)+R(60,99,36,12,d)+R(60,123,105,12,d),
 [[63,51,72],[96,69,93],[132,60,117],[168,81,108]].map(([x,a,b])=>R(x,a,24,b-a,'#5088af')+R(x,b,24,138-b,l)).join(''),
 R(57,111,12,42,d)+R(72,84,12,69,l)+R(114,63,12,90,d)+R(129,96,12,57,l)+R(168,123,12,30,d)+R(183,81,12,72,l)+'<path d="M100 33v120M154 33v120" stroke="#ccc" stroke-width="3"/>',
 R(60,48,63,45,'#7da9cb')+R(60,96,63,42,'#5088af')+R(126,48,33,30,'#7da9cb')+R(162,48,30,30,l)+R(126,81,21,30,'#f9a3a3')+R(150,81,21,30,'#7da9cb')+R(174,81,18,30,l)+R(126,114,21,24,'#d85f5a')+R(150,114,21,24,l)+R(174,114,18,12,'#5088af')+R(174,129,18,9,l),
 Cs(75,65,14,'#8fb7d6')+Cs(75,77,14,d)+Cs(75,118,14,d)+Cs(128,65,14,d)+Cs(128,108,14,d)+Cs(128,120,14,'#8fb7d6')+Cs(182,65,14,'#8fb7d6')+Cs(182,86,14,l)+Cs(182,134,14,l)+'<path d="M114 155a14 14 0 0 1 28 0" fill="none" stroke="#a5cdec" stroke-width="3"/>',
 Cs(69,60,11,d)+Cs(69,75,11,l)+Cs(98,72,11,d)+Cs(98,108,11,l)+Cs(69,130,11,l)+Cs(98,136,11,d)+Cs(158,61,11,l)+Cs(186,72,11,d)+Cs(186,86,11,'#7da9cb')+Cs(158,118,11,'#7da9cb')+Cs(158,130,11,l)+Cs(186,124,11,l)+'<path d="M127 33v120" stroke="#ccc" stroke-width="3"/>',
 L('60,62 78,48 112,90 141,68 165,90 197,72',or)+L('56,90 75,92 112,65 132,85 165,105 195,100',lo)+L('55,106 78,128 128,102 165,126 197,118',bl),
 L('54,82 75,85 95,66 115,66',or)+L('54,100 75,100 95,76 115,93',lo)+L('54,122 75,130 90,112 115,112',bl)+L('137,80 158,58 175,75 198,66',or)+L('137,100 158,85 175,95 198,92',lo)+L('137,118 158,112 175,120 198,112',bl)+'<path d="M127 33v120" stroke="#eee" stroke-width="3"/>',
 ticks+L('70,72 95,48 122,80 140,65 168,80 187,66',or)+L('70,98 92,92 122,118 140,108 168,122 187,100',bl),
 area(51,1),area(51,.48)+area(129,.48),
 ticks+R(72,96,15,51,bl)+R(96,81,15,66,bl)+R(120,108,15,39,bl)+R(144,54,15,93,bl)+R(168,93,15,54,bl)+L('77,85 101,58 128,95 155,72 182,95','#fae3cc'),
 [[66,132],[84,96],[108,66],[117,108],[171,72]].map(([x,y])=>Cs(x,y,11,'#fbdfc5')).join('')+pl(94,125)+pl(136,86)+pl(148,52)+pl(148,122)+pl(181,104),
 [135,120,93,63,51,63,93,120,135].map((t,i)=>R(60+15*i,t,12,144-t,gg)).join(''),
 box(73,84,97,120,62,130)+box(109,69,97,111,55,137)+box(145,78,102,126,52,140)+box(181,63,99,114,46,142),
 R(54,42,27,24,gg)+R(102,42,12,24,'#f9dcc5')+R(117,42,12,24,'#fdebd8')+R(150,42,6,24,'#f9dcc5')+R(168,42,24,24,'#fdebd8')+R(54,78,18,24,lg)+R(75,78,8,24,gg)+R(96,78,12,24,gg)+R(117,78,42,24,lg)+R(174,78,24,24,'#f9dcc5')+R(54,117,6,24,gg)+R(69,117,24,24,'#fdebd8')+R(98,117,6,24,'#f9dcc5')+R(111,117,12,24,lg)+R(141,117,21,24,gg)+R(180,117,12,24,'#fdebd8'),
 R(57,51,75,12,gg)+R(132,51,48,12,'#f8f8f8')+R(57,87,120,12,gg)+R(57,123,63,12,gg)+'<path d="M142 45v24M163 81v24M181 117v24" stroke="#aaa" stroke-width="3"/>',
 C(91,71,11,G)+C(120,63,15,G)+C(148,66,9,g)+C(178,80,20,q)+C(88,113,28,g)+C(133,96,17,q)+C(162,112,11,o)+C(132,129,13,G)
];
def('chart-card',h=>`<style>:host{display:block;width:83px;height:62px;background:#fff;box-sizing:border-box;border:1px solid #dcdcdc;border-radius:1px}:host([sel]){border:3px solid #c87347;width:84px;height:63px;margin:0 -1px -1px 0;border-radius:2px}svg{display:block;margin:-1px}:host([sel]) svg{margin:-3px}text{font-family:"Liberation Sans",sans-serif}</style><svg width="83" height="62" viewBox="0 0 249 186">${K[+h.getAttribute('n')]}</svg>`);
def('field-pill',h=>`<style>:host{display:flex;align-items:center;height:30px;border-radius:15px;box-sizing:border-box;padding-left:16px;color:#fff;background:#4996b2;width:${h.getAttribute('pw')}px;font:400 19px ${UI};margin-left:5px}:host([m]){background:#00b180}</style><fit-text w="${h.getAttribute('w')}">${h.textContent}</fit-text>`);
def('show-me',()=>`<style>:host{display:block;width:306px;filter:drop-shadow(2px 2px 2px rgba(0,0,0,.28));font:300 19px/23px ${UI};color:#111}
.tab{margin-left:156px;height:54px;background:#fafafa;border:solid #dadada;border-width:1px 0 0 1px;box-sizing:border-box;display:flex;align-items:center;padding:0 0 6px 15px;gap:8px;font-size:21px}
.body{height:826px;background:#fafafa;box-sizing:border-box;border-left:1px solid #dadada;padding:22px 0 0 20px;background-image:linear-gradient(#dadada,#dadada);background-size:156px 1px;background-repeat:no-repeat}
.g{display:grid;grid-template-columns:repeat(3,83px);gap:7px}.r,.f,.n{margin-left:1px}.r{display:flex;align-items:center;height:30px;margin-top:12px}.f{display:flex;gap:5px;margin-top:26px;height:23px}.n{color:#777;margin-top:16px}b{font-weight:700}svg{display:block}</style>
<div class="tab"><svg width="14" height="16"><path fill="#8b6f8f" d="M0 0h11v3H0z"/><path fill="#8da3c4" d="M0 4h14v3H0z"/><path fill="#dba78b" d="M0 8.500h5v3H0z"/><path fill="#d97884" d="M0 12.500h8v3H0z"/></svg><fit-text w="83">Show Me</fit-text></div>
<div class="body"><div class="g">${K.map((_,i)=>`<chart-card n="${i}" ${i==3?'sel':''}></chart-card>`).join('')}</div>
<div class="f"><fit-text w="27">For</fit-text><b><fit-text w="113">symbol maps</fit-text></b><fit-text w="22">try</fit-text></div>
<div class="r"><fit-text w="42">1 geo</fit-text><svg style="margin-left:9px" width="12" height="12" fill="none" stroke="#666"><circle cx="6" cy="6" r="5"/><ellipse cx="6" cy="6" rx="2.300" ry="5"/><path d="M1 6h10M2 3.500h8M2 8.500h8"/></svg><field-pill pw="126" w="89">Dimension</field-pill></div>
<div class="r"><fit-text w="80">0 or more</fit-text><field-pill pw="136" w="98">Dimensions</field-pill></div>
<div class="r"><fit-text w="46">0 to 2</fit-text><field-pill m pw="118" w="82">Measures</field-pill></div>
<div class="n"><fit-text w="222">May use spatial measure in</fit-text><fit-text w="188">place of geo dimension</fit-text></div></div>`);

/* ---------- bottom ---------- */
def('sheet-tab',`<style>:host{display:flex;align-items:center;box-sizing:border-box;border-right:1px solid #c4c4c4;height:44px;font:300 19.500px ${UI};color:#555;flex:none}:host([on]){background:#fafafa;font:600 18.500px ${TB};padding-bottom:2px}</style><slot></slot>`);
def('tab-strip',`<style>:host{display:flex;height:46px;box-sizing:border-box;border:solid #c8c8c8;border-width:1px 0;background:#e6e6e6}svg{flex:none;fill:none;stroke:#555;stroke-width:1.300;overflow:visible}</style>
<sheet-tab style="width:196px;padding-left:12px"><svg width="16" height="14"><ellipse cx="5" cy="3.500" rx="3.600" ry="2"/><path d="M1.400 3.500v7c0 2 7.200 2 7.200 0v-7"/></svg><fit-text w="102">Data Source</fit-text></sheet-tab>
<sheet-tab style="width:129px;padding-left:9px"><fit-text w="104">Sales in USA</fit-text></sheet-tab><sheet-tab style="width:119px;padding-left:8px"><fit-text w="96">USA Profits</fit-text></sheet-tab><sheet-tab style="width:173px;padding-left:8px"><fit-text w="148">USA Sales Trends</fit-text></sheet-tab>
<sheet-tab on style="width:226px;padding-left:10px"><svg width="17" height="12"><path d="M.7.7h10.600v10.600H.7zM6 .7v10.600M.7 6h10.600"/></svg><fit-text w="188">USA Sales and Profits</fit-text></sheet-tab>
<sheet-tab style="width:32px;padding-left:9px"><svg width="16" height="16"><path d="M7 11.500H.7V1h10.600v6M3.500 9V7M6 9V5M8.500 8V4"/><path d="M7.500 11.500h8M11.500 7.500v8" stroke-width="2"/></svg></sheet-tab><sheet-tab style="width:32px;padding-left:9px"><svg width="16" height="16"><path d="M7 11.500H.7V1h10.600v6M6 1v10M.7 6h10.600"/><path d="M7.500 11.500h8M11.500 7.500v8" stroke-width="2"/></svg></sheet-tab><sheet-tab style="width:32px;padding-left:9px"><svg width="16" height="16"><path d="M6 12L.7 10V1L6 3l5-2v6M6 3v8"/><path d="M7.500 11.500h8M11.500 7.500v8" stroke-width="2"/></svg></sheet-tab>`);
def('status-bar',`<style>:host{display:flex;align-items:center;height:29px;background:#ebebeb;font:300 17px ${UI};color:#000;padding-left:3px;box-sizing:border-box}fit-text{margin-right:25px}svg{margin-left:auto}</style>
<fit-text w="99">1 of 49 marks</fit-text><fit-text w="129">1 row by 1 column</fit-text><fit-text w="157">SUM(Sales): 457,688</fit-text>
<svg width="483" height="29"><path d="M.500 0v29M189.500 0v29M228.500 0v29M267.500 0v29M339.500 0v29" stroke="#d2d2d2"/><g fill="#aaa"><path d="M346 11h1.500v8H346zM353 11v8l-5-4zM367 11v8l-5-4zM379 11v8l5-4zM393 11v8l5-4zM398.500 11h1.500v8h-1.500z"/><path d="M420 10h3v3h-3zM424.500 10h3v3h-3zM429 10h3v3h-3zM420 14h3v3h-3zM424.500 14h3v3h-3zM429 14h3v3h-3zM420 18h3v2h-3zM424.500 18h3v2h-3zM429 18h3v2h-3zM443 10h12v6h-12zM443 17.500h3v2.500h-3zM447.500 17.500h3v2.500h-3zM452 17.500h3v2.500h-3z"/></g><path d="M466 10h11v10h-11z" fill="#555"/></svg>`);

def('tableau-app',`<style>:host{display:flex;flex-direction:column;width:1919px;height:1007px;position:relative}.m{display:flex;height:807px;background:#f4f4f4}show-me{position:absolute;left:1609px;top:72px}</style>
<title-bar></title-bar><menu-bar></menu-bar><tool-bar></tool-bar><div class="m"><side-pane></side-pane><dash-board></dash-board></div><tab-strip></tab-strip><status-bar></status-bar><show-me></show-me>`);
</script>
</body>
</html>
